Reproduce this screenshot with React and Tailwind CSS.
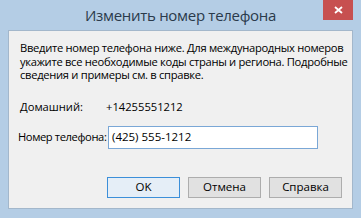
export default function App() {
  return (
    <div
      className="w-[361px] h-[218px] bg-[#b4cde5] flex flex-col overflow-hidden"
      style={{ fontFamily: '"Open Sans", "Noto Sans", sans-serif' }}
    >
      {/* Title bar */}
      <div className="h-[30px] relative flex items-center justify-center">
        <span className="text-[15px] text-[#2a3a4b] mt-[1px] tracking-[-0.3px] whitespace-nowrap">Изменить номер телефона</span>
        <div className="absolute right-[8px] top-0 w-[30px] h-[20px] bg-[#c75050] flex items-center justify-center">
          <svg width="9" height="8" viewBox="0 0 9 8">
            <path d="M1 1 L8 7 M8 1 L1 7" stroke="#fff" strokeWidth="1.8" />
          </svg>
        </div>
      </div>

      {/* Content */}
      <div className="ml-[8px] mr-[8px] h-[179px] bg-[#f0f0f0] border border-[#a3b7cb] flex flex-col text-[11.2px] text-black whitespace-nowrap">
        <p className="mt-[10px] ml-[11px] leading-[13.5px] tracking-[-0.3px]">
          Введите номер телефона ниже. Для международных номеров
          <br />
          укажите все необходимые коды страны и региона. Подробные
          <br />
          сведения и примеры см. в справке.
        </p>

        <div className="mt-[19px] ml-[11px] flex items-center h-[14px]">
          <span className="w-[86px]">Домашний:</span>
          <span>+14255551212</span>
        </div>

        <div className="mt-[11px] ml-[9px] flex items-center">
          <span className="w-[90px] tracking-[-0.4px]">Номер телефона:</span>
          <div className="w-[210px] h-[23px] bg-white border border-[#7aa7d6] flex items-center pl-[3px] text-[11.5px]">
            (425) 555-1212
          </div>
        </div>

        <div className="mt-[28px] ml-[98px] flex gap-[8px]">
          <button className="w-[73px] h-[21px] bg-[#e5eef7] border border-[#3c8fd9] flex items-center justify-center text-[11.5px]">
            OK
          </button>
          <button className="w-[73px] h-[21px] bg-[#e1e1e1] border border-[#adadad] flex items-center justify-center text-[11.5px]">
            Отмена
          </button>
          <button className="w-[73px] h-[21px] bg-[#e1e1e1] border border-[#adadad] flex items-center justify-center text-[11.5px]">
            Справка
          </button>
        </div>
      </div>
    </div>
  );
}
